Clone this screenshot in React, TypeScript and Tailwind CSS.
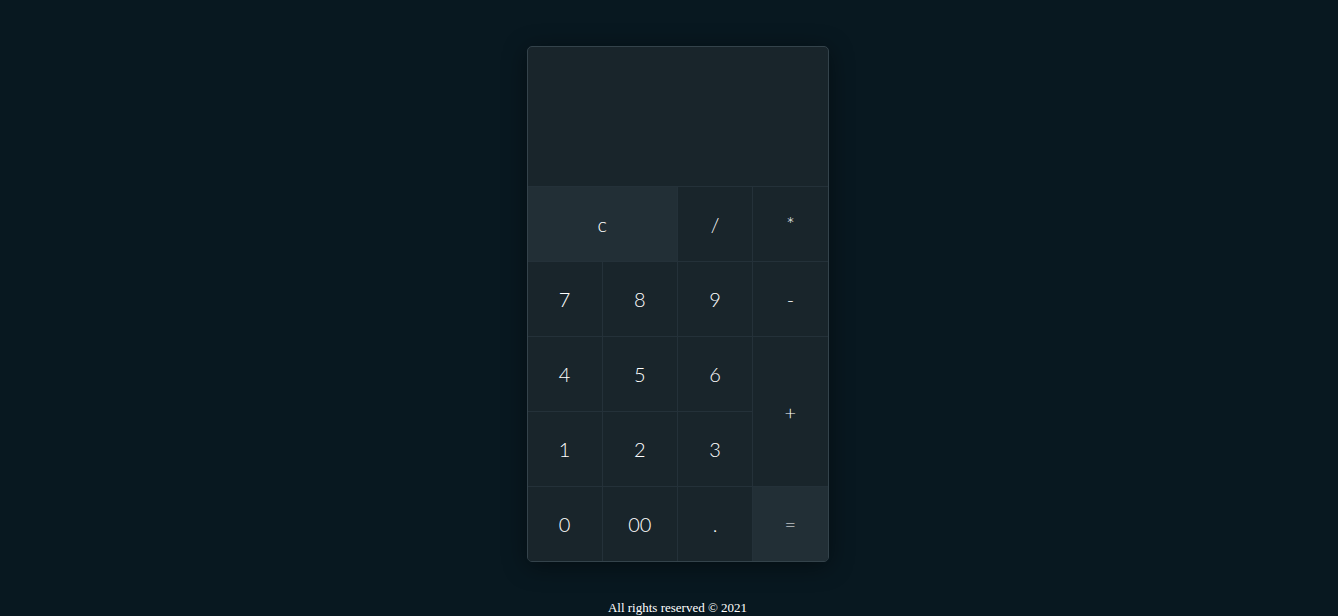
const keys: { label: string; className?: string; accent?: boolean }[] = [
  { label: "c", className: "col-span-2", accent: true },
  { label: "/" },
  { label: "*" },
  { label: "7" },
  { label: "8" },
  { label: "9" },
  { label: "-" },
  { label: "4" },
  { label: "5" },
  { label: "6" },
  { label: "+", className: "row-span-2" },
  { label: "1" },
  { label: "2" },
  { label: "3" },
  { label: "0" },
  { label: "00" },
  { label: "." },
  { label: "=", accent: true },
];

export default function App() {
  return (
    <div className="min-h-[616px] bg-[#081820] flex flex-col items-center pt-[46px] pl-[17px]">
      {/* Calculator */}
      <div className="w-[302px] rounded-[5px] border border-[#34434b] bg-[#19252b] overflow-hidden shadow-[0_4px_24px_rgba(0,0,0,0.45)]">
        <div className="h-[139px]" />
        <div className="grid grid-cols-4 auto-rows-[74px] gap-px bg-[#243139] pt-px">
          {keys.map((k) => (
            <button
              key={k.label}
              className={`${k.className ?? ""} ${
                k.accent ? "bg-[#222f36]" : "bg-[#19252b]"
              } flex items-center justify-center text-[20px] font-light text-white [font-family:Lato,'Open_Sans',sans-serif]`}
            >
              {k.label}
            </button>
          ))}
        </div>
      </div>

      {/* Footer */}
      <p className="mt-[36px] text-[13px] text-white [font-family:'Liberation_Serif',serif]">
        All rights reserved © 2021
      </p>
    </div>
  );
}
